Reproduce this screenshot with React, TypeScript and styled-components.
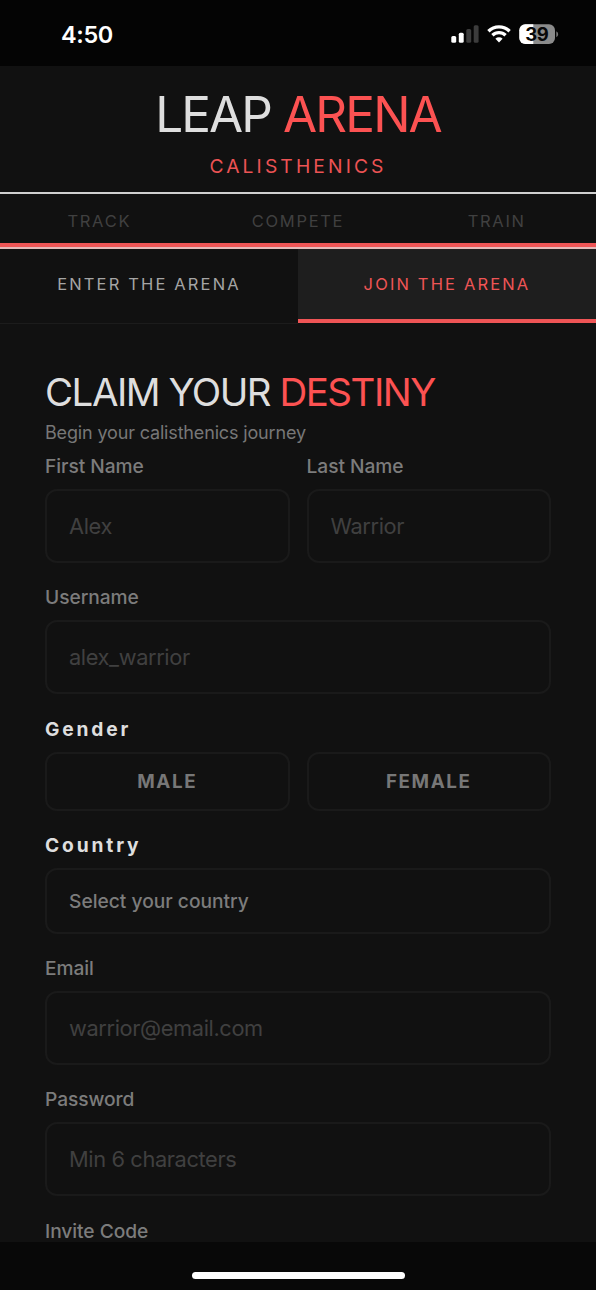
import React from "react";
import styled, { createGlobalStyle } from "styled-components";

const accent = "#fc5252";

const GlobalStyle = createGlobalStyle`
  * { box-sizing: border-box; }
  body { margin: 0; background: #111; font-family: Inter, "Liberation Sans", sans-serif; }
  input, button { font-family: inherit; }
`;

const Screen = styled.div`
  display: flex;
  flex-direction: column;
  width: 596px;
  height: 1290px;
  overflow: hidden;
  background: #111;
`;

const StatusBar = styled.div`
  flex: none;
  display: flex;
  justify-content: space-between;
  align-items: center;
  height: 66px;
  padding: 2px 37px 0 61px;
  background: #040404;
`;

const Time = styled.span`
  color: #fff;
  font-size: 23.5px;
  font-weight: 600;
  letter-spacing: -0.35px;
`;

const StatusIcons = styled.svg`
  display: block;
  margin-bottom: 2px;
`;

const Header = styled.header`
  flex: none;
  display: flex;
  flex-direction: column;
  align-items: center;
  height: 128px;
  padding-top: 18px;
  border-bottom: 2px solid #d0d0d0;
`;

const Logo = styled.h1`
  margin: 0;
  color: #dedede;
  font-size: 49.5px;
  line-height: 60px;
  font-weight: 400;
  letter-spacing: -1.9px;
  white-space: nowrap;
`;

const Accent = styled.span`
  color: ${accent};
`;

const Tagline = styled.div`
  margin-top: 9px;
  color: #ec5354;
  font-size: 19.3px;
  line-height: 26px;
  letter-spacing: 3.1px;
`;

const Pillars = styled.nav`
  flex: none;
  display: grid;
  grid-template-columns: repeat(3, 1fr);
  height: 55px;
  padding-top: 14px;
  border-bottom: 2px solid #e3b9b9;
  box-shadow: inset 0 -4px 0 #ef5556;
`;

const Pillar = styled.span`
  color: #404040;
  font-size: 16.5px;
  line-height: 26px;
  letter-spacing: 1.7px;
  text-align: center;
`;

const Tabs = styled.div`
  flex: none;
  display: grid;
  grid-template-columns: 1fr 1fr;
  height: 75px;
`;

const Tab = styled.button<{ $active?: boolean }>`
  height: ${(p) => (p.$active ? 74 : 75)}px;
  padding: ${(p) => (p.$active ? "0" : "0 0 4px")};
  border: 0;
  border-bottom: ${(p) => (p.$active ? "4px solid #ef5556" : "1px solid #1c1c1c")};
  background: ${(p) => (p.$active ? "#1e1e1e" : "#111")};
  color: ${(p) => (p.$active ? "#ef5556" : "#a5a5a5")};
  font-size: 16.5px;
  letter-spacing: 2.15px;
`;

const Form = styled.form`
  flex: 1;
  min-height: 0;
  overflow: hidden;
  display: flex;
  flex-direction: column;
  padding: 43px 45px 0;
`;

const Title = styled.h2`
  flex: none;
  margin: 0;
  color: #dedede;
  font-size: 38.5px;
  line-height: 50px;
  font-weight: 400;
  letter-spacing: -1.5px;
  white-space: nowrap;
`;

const Subtitle = styled.p`
  flex: none;
  margin: 4px 0 9px;
  color: #777;
  font-size: 18px;
  line-height: 24px;
  letter-spacing: -0.16px;
`;

const Row = styled.div`
  flex: none;
  display: grid;
  grid-template-columns: 1fr 1fr;
  column-gap: 17px;
`;

const Field = styled.div`
  flex: none;
  display: flex;
  flex-direction: column;
  min-width: 0;
  margin-bottom: 22.3px;
`;

const Label = styled.label<{ $strong?: boolean; $spacing?: number }>`
  height: 24px;
  margin-bottom: 11px;
  color: ${(p) => (p.$strong ? "#dedede" : "#7c7c7c")};
  font-size: 19.2px;
  line-height: 24px;
  font-weight: ${(p) => (p.$strong ? 700 : 500)};
  letter-spacing: ${(p) => p.$spacing ?? -0.06}px;
`;

const Input = styled.input`
  width: 100%;
  height: 74px;
  padding: 0 22px;
  border: 2px solid #1a1a1a;
  border-radius: 12px;
  background: #111;
  color: #dedede;
  font-size: 21.8px;
  letter-spacing: -0.38px;
  outline: none;
  &::placeholder { color: #404040; opacity: 1; }
`;

const Choice = styled.button`
  height: 59.5px;
  padding: 0;
  border: 2px solid #1a1a1a;
  border-radius: 12px;
  background: #111;
  color: #777;
  font-size: 18.8px;
  font-weight: 700;
  letter-spacing: 1.6px;
`;

const Select = styled.button`
  height: 65.4px;
  padding: 0 22px;
  border: 2px solid #1a1a1a;
  border-radius: 12px;
  background: #111;
  color: #7c7c7c;
  font-size: 19.2px;
  font-weight: 500;
  text-align: left;
`;

const HomeArea = styled.div`
  flex: none;
  display: flex;
  justify-content: center;
  height: 48px;
  padding-top: 29.5px;
  background: #080808;
`;

const HomeIndicator = styled.div`
  width: 213px;
  height: 7px;
  border-radius: 4px;
  background: #fff;
`;

const BatteryText = styled.text`
  font-family: Inter, sans-serif;
  font-size: 18.5px;
  font-weight: 700;
  letter-spacing: -0.5px;
`;

function DeviceIcons() {
  return (
    <StatusIcons width="108" height="24" viewBox="0 0 108 24">
      <rect x="0.3" y="15" width="4.9" height="6.7" rx="1.5" fill="#fff" />
      <rect x="7.8" y="11.8" width="4.9" height="9.9" rx="1.5" fill="#fff" />
      <rect x="15.3" y="8" width="4.9" height="13.7" rx="1.5" fill="#3c3c3c" />
      <rect x="22.7" y="4.2" width="4.9" height="17.5" rx="1.5" fill="#3c3c3c" />
      <g fill="none" stroke="#fff" strokeWidth="3.3">
        <path d="M37.4 10.2a15.2 15.2 0 0 1 21.2 0" />
        <path d="M41.4 14.3a9.5 9.5 0 0 1 13.2 0" />
      </g>
      <path d="M44.4 17.7a5.1 5.1 0 0 1 7.2 0L48 21.4Z" fill="#fff" />
      <clipPath id="battery"><rect x="68.3" y="3.2" width="35.7" height="19.8" rx="6" /></clipPath>
      <g clipPath="url(#battery)">
        <rect x="68" y="3" width="36" height="20" fill="#8b8b8b" />
        <rect x="68" y="3" width="14.3" height="20" fill="#fff" />
      </g>
      <path d="M105.3 10.2v6q1.9-.8 1.9-3t-1.9-3Z" fill="#777" />
      <BatteryText x="85.8" y="19.8" textAnchor="middle" fill="#080808">39</BatteryText>
    </StatusIcons>
  );
}

export default function App() {
  return (
    <Screen>
      <GlobalStyle />
      <StatusBar>
        <Time>4:50</Time>
        <DeviceIcons />
      </StatusBar>
      <Header>
        <Logo>LEAP <Accent>ARENA</Accent></Logo>
        <Tagline>CALISTHENICS</Tagline>
      </Header>
      <Pillars>
        <Pillar>TRACK</Pillar>
        <Pillar>COMPETE</Pillar>
        <Pillar>TRAIN</Pillar>
      </Pillars>
      <Tabs>
        <Tab>ENTER THE ARENA</Tab>
        <Tab $active>JOIN THE ARENA</Tab>
      </Tabs>
      <Form>
        <Title>CLAIM YOUR <Accent>DESTINY</Accent></Title>
        <Subtitle>Begin your calisthenics journey</Subtitle>
        <Row>
          <Field><Label>First Name</Label><Input placeholder="Alex" /></Field>
          <Field><Label>Last Name</Label><Input placeholder="Warrior" /></Field>
        </Row>
        <Field><Label>Username</Label><Input placeholder="alex_warrior" /></Field>
        <Field>
          <Label $strong $spacing={2.85}>Gender</Label>
          <Row>
            <Choice type="button">MALE</Choice>
            <Choice type="button">FEMALE</Choice>
          </Row>
        </Field>
        <Field>
          <Label $strong $spacing={2.85}>Country</Label>
          <Select type="button">Select your country</Select>
        </Field>
        <Field><Label>Email</Label><Input placeholder="warrior@email.com" /></Field>
        <Field><Label>Password</Label><Input placeholder="Min 6 characters" /></Field>
        <Field><Label>Invite Code</Label></Field>
      </Form>
      <HomeArea><HomeIndicator /></HomeArea>
    </Screen>
  );
}
